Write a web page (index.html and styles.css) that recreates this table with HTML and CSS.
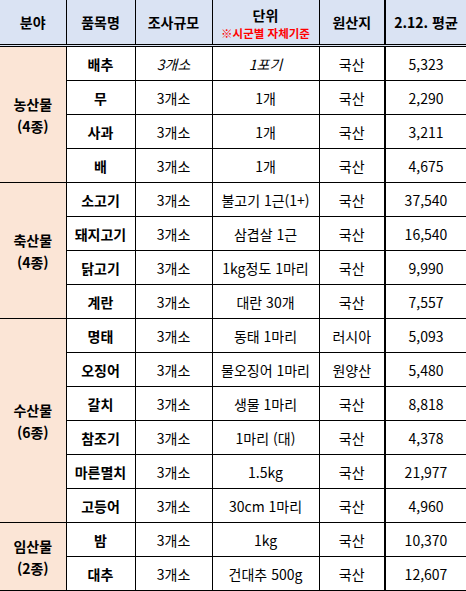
FILE: index.html
```html
<!DOCTYPE html>
<html lang="ko">
<head>
<meta charset="utf-8">
<link rel="stylesheet" href="styles.css">
</head>
<body>
<table class="price">
<colgroup>
<col class="c-cat"><col class="c-item"><col class="c-size"><col class="c-unit"><col class="c-origin"><col class="c-avg">
</colgroup>
<thead>
<tr>
<th>분야</th><th>품목명</th><th>조사규모</th>
<th class="unit-head"><span class="uh-main">단위</span><span class="uh-note">※시군별 자체기준</span></th>
<th>원산지</th><th class="avg">2.12. 평균</th>
</tr>
</thead>
<tbody>
<tr><td class="cat" rowspan="4">농산물<br>(4종)</td><td class="item">배추</td><td class="it">3개소</td><td class="it">1포기</td><td>국산</td><td class="avg">5,323</td></tr>
<tr><td class="item">무</td><td>3개소</td><td>1개</td><td>국산</td><td class="avg">2,290</td></tr>
<tr><td class="item">사과</td><td>3개소</td><td>1개</td><td>국산</td><td class="avg">3,211</td></tr>
<tr><td class="item">배</td><td>3개소</td><td>1개</td><td>국산</td><td class="avg">4,675</td></tr>
<tr><td class="cat" rowspan="4">축산물<br>(4종)</td><td class="item">소고기</td><td>3개소</td><td>불고기 1근(1+)</td><td>국산</td><td class="avg">37,540</td></tr>
<tr><td class="item">돼지고기</td><td>3개소</td><td>삼겹살 1근</td><td>국산</td><td class="avg">16,540</td></tr>
<tr><td class="item">닭고기</td><td>3개소</td><td>1kg정도 1마리</td><td>국산</td><td class="avg">9,990</td></tr>
<tr><td class="item">계란</td><td>3개소</td><td>대란 30개</td><td>국산</td><td class="avg">7,557</td></tr>
<tr><td class="cat" rowspan="6">수산물<br>(6종)</td><td class="item">명태</td><td>3개소</td><td>동태 1마리</td><td>러시아</td><td class="avg">5,093</td></tr>
<tr><td class="item">오징어</td><td>3개소</td><td>물오징어 1마리</td><td>원양산</td><td class="avg">5,480</td></tr>
<tr><td class="item">갈치</td><td>3개소</td><td>생물 1마리</td><td>국산</td><td class="avg">8,818</td></tr>
<tr><td class="item">참조기</td><td>3개소</td><td>1마리 (대)</td><td>국산</td><td class="avg">4,378</td></tr>
<tr><td class="item">마른멸치</td><td>3개소</td><td>1.5kg</td><td>국산</td><td class="avg">21,977</td></tr>
<tr><td class="item">고등어</td><td>3개소</td><td>30cm 1마리</td><td>국산</td><td class="avg">4,960</td></tr>
<tr><td class="cat" rowspan="2">임산물<br>(2종)</td><td class="item">밤</td><td>3개소</td><td>1kg</td><td>국산</td><td class="avg">10,370</td></tr>
<tr><td class="item">대추</td><td>3개소</td><td>건대추 500g</td><td>국산</td><td class="avg">12,607</td></tr>
</tbody>
</table>
</body>
</html>
```

FILE: styles.css
```css
html, body {
  margin: 0;
  padding: 0;
  background: #ffffff;
}

.price {
  border-collapse: collapse;
  table-layout: fixed;
  width: 466px;
  font-family: "Noto Sans CJK KR", "Noto Sans", sans-serif;
  font-size: 14px;
  color: #000;
}

.c-cat { width: 66px; }
.c-item { width: 69px; }
.c-size { width: 77px; }
.c-unit { width: 107px; }
.c-origin { width: 66px; }
.c-avg { width: 81px; }

.price th,
.price td {
  border: 1px solid #000;
  padding: 0;
  text-align: center;
  vertical-align: middle;
  line-height: 16px;
}

.price tr > :first-child { border-left: none; }
.price tr > :last-child { border-right: none; }
.price thead th { border-top: none; }

.price thead th {
  height: 44px;
  background: #dae3f3;
  font-weight: bold;
  font-size: 14px;
  border-bottom: 3px double #000;
}

.unit-head .uh-main {
  display: block;
  line-height: 20px;
  margin-top: 2px;
}
.unit-head .uh-note {
  display: block;
  color: #ff0000;
  font-size: 11.5px;
  line-height: 16px;
}

.price td {
  height: 33px;
}

.price td.cat {
  background: #fbe5d6;
  font-weight: bold;
  font-size: 14px;
  line-height: 22px;
}

.price td.item {
  font-weight: bold;
  font-size: 14px;
}

.price td.it {
  font-style: italic;
}

.price .avg {
  border-left: 2px solid #000;
}
```
